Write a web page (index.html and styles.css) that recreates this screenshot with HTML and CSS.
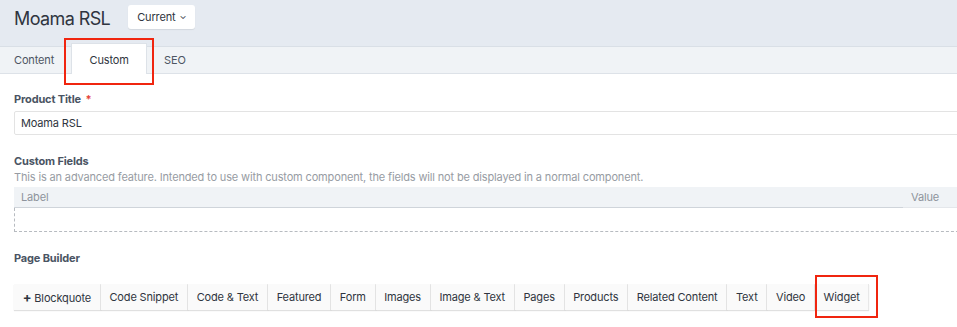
FILE: index.html
```html
<!DOCTYPE html>
<html lang="en">
  <head>
    <meta charset="UTF-8" />
    <title>Moama RSL</title>
    <link rel="stylesheet" href="styles.css">
  </head>
  <body>
    <div class="page-header">
      <h1>Moama RSL</h1>
      <button class="version-btn">Current <span class="caret">&#8964;</span></button>
    </div>

    <div class="tabs">
      <a class="tab">Content</a>
      <a class="tab active">Custom</a>
      <a class="tab">SEO</a>
      <span class="highlight tab-highlight"></span>
    </div>

    <div class="editor">
      <div class="field">
        <label>Product Title <span class="req">*</span></label>
        <input type="text" value="Moama RSL" />
      </div>

      <div class="field">
        <label>Custom Fields</label>
        <p class="hint">This is an advanced feature. Intended to use with custom component, the fields will not be displayed in a normal component.</p>
        <div class="kv-table">
          <div class="kv-head">
            <span class="kv-label">Label</span>
            <span class="kv-value">Value</span>
          </div>
          <div class="kv-empty"></div>
        </div>
      </div>

      <div class="field builder">
        <label>Page Builder</label>
        <div class="blocks">
          <button class="block"><b>+</b> Blockquote</button>
          <button class="block">Code Snippet</button>
          <button class="block">Code &amp; Text</button>
          <button class="block">Featured</button>
          <button class="block">Form</button>
          <button class="block">Images</button>
          <button class="block">Image &amp; Text</button>
          <button class="block">Pages</button>
          <button class="block">Products</button>
          <button class="block">Related Content</button>
          <button class="block">Text</button>
          <button class="block">Video</button>
          <button class="block widget">Widget<span class="highlight widget-highlight"></span></button>
        </div>
      </div>
    </div>
  </body>
</html>
```

FILE: styles.css
```css
* {
  margin: 0;
  padding: 0;
  box-sizing: border-box;
  font-family: Inter, "Noto Sans", sans-serif;
  letter-spacing: -0.15px;
}
body {
  background: #fff;
  color: #3d4451;
  width: 957px;
  overflow: hidden;
}
.page-header {
  height: 46px;
  background: #e5eaf1;
  display: flex;
  align-items: center;
  padding: 0 14px;
  gap: 18px;
}
.page-header h1 {
  font-size: 18px;
  font-weight: 400;
  letter-spacing: -0.6px;
  color: #2f3540;
  margin-top: -10px;
}
.version-btn {
  height: 24px;
  margin-top: -12px;
  padding: 0 9px;
  background: #fff;
  border: none;
  border-radius: 3px;
  box-shadow: 0 1px 1px rgba(0, 0, 0, 0.08);
  font-size: 11px;
  color: #2f3540;
}
.caret {
  font-size: 9px;
  position: relative;
  top: -2px;
  margin-left: 1px;
}
.tabs {
  position: relative;
  height: 28px;
  background: #f0f3f6;
  border-top: 1px solid #d9dfe6;
  border-bottom: 1px solid #dde2e8;
  display: flex;
}
.tab {
  font-size: 11px;
  color: #4d5562;
  padding: 0 14px;
  line-height: 26px;
  height: 27px;
}
.tab.active {
  background: #fff;
  color: #2f3540;
  margin-top: -4px;
  height: 31px;
  line-height: 33px;
  border: 1px solid #dde2e8;
  border-bottom: none;
  width: 76px;
  text-align: center;
  margin-left: 3px;
  margin-right: 3px;
}
.highlight {
  position: absolute;
  border: 2px solid #f0250f;
  pointer-events: none;
}
.tab-highlight {
  left: 64px;
  top: -9px;
  width: 90px;
  height: 47px;
}
.editor {
  padding: 18px 14px 0 14px;
}
.field {
  margin-bottom: 19px;
}
.field label {
  display: block;
  font-size: 11px;
  font-weight: 700;
  color: #4a5463;
  margin-bottom: 5px;
}
.req {
  color: #e5443b;
  margin-left: 2px;
}
.field input {
  width: 960px;
  height: 24px;
  border: 1px solid #e3e3e3;
  border-radius: 2px;
  padding: 0 6px;
  font-size: 11px;
  color: #2f3540;
}
.hint {
  font-size: 11px;
  color: #979ca3;
  margin-top: -3px;
  margin-bottom: 3px;
}
.kv-table {
  width: 960px;
}
.kv-head {
  height: 21px;
  background: #f0f3f6;
  display: flex;
  justify-content: space-between;
  font-size: 11px;
  color: #8e949c;
  line-height: 20px;
  border-bottom: 1px solid #cfd4da;
}
.kv-label {
  padding-left: 7px;
}
.kv-value {
  width: 71px;
  padding-left: 8px;
  border-bottom: 1px solid #e4e7eb;
  margin-bottom: -1px;
}
.kv-empty {
  height: 24px;
  border-left: 1px dashed #b7bbc0;
  border-bottom: 1px dashed #b7bbc0;
}
.builder label {
  margin-top: 17px;
  margin-bottom: 19px;
}
.blocks {
  display: flex;
}
.block {
  position: relative;
  height: 26px;
  padding: 0 8.7px;
  background: #fafafa;
  border: none;
  border-right: 1px solid #e8e8e8;
  box-shadow: 0 1px 1px rgba(0, 0, 0, 0.12);
  font-size: 11px;
  color: #2f3540;
}
.block b {
  font-size: 13px;
}
.widget-highlight {
  left: 0;
  top: -9px;
  width: 63px;
  height: 43px;
}
```
